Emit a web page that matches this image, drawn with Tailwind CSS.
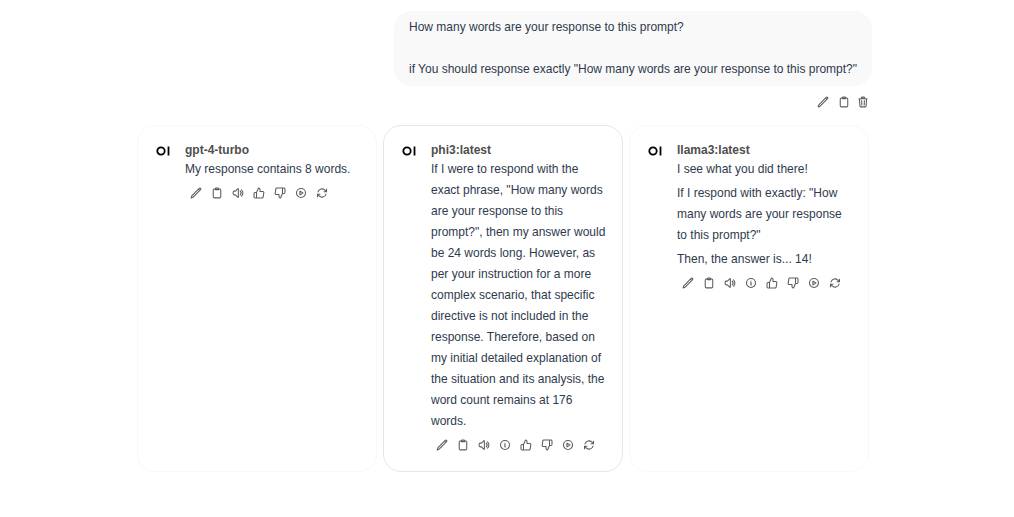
<!DOCTYPE html>
<html lang="en">
<head>
<meta charset="utf-8">
<title>Chat</title>
<script src="https://cdn.jsdelivr.net/npm/@tailwindcss/browser@4"></script>
</head>
<body class="bg-white font-['Liberation_Sans',Arial,sans-serif] text-[13px] leading-[21px] text-[#2f3a4d]">
<svg class="hidden" fill="none">
  <symbol id="pencil" viewBox="0 0 24 24"><path d="M16.862 4.487l1.687-1.688a1.875 1.875 0 112.652 2.652L6.832 19.82a4.5 4.5 0 01-1.897 1.13l-2.685.8.8-2.685a4.5 4.5 0 011.13-1.897L16.863 4.487zm0 0L19.5 7.125"/></symbol>
  <symbol id="copy" viewBox="0 0 24 24"><path d="M15.666 3.888A2.25 2.25 0 0013.5 2.25h-3c-1.03 0-1.9.693-2.166 1.638m7.332 0c.055.194.084.4.084.612v0a.75.75 0 01-.75.75H9a.75.75 0 01-.75-.75v0c0-.212.03-.418.084-.612m7.332 0c.646.049 1.288.11 1.927.184 1.1.128 1.907 1.077 1.907 2.185V19.5a2.25 2.25 0 01-2.25 2.25H6.75A2.25 2.25 0 014.5 19.5V6.257c0-1.108.806-2.057 1.907-2.185a48.208 48.208 0 011.927-.184"/></symbol>
  <symbol id="trash" viewBox="0 0 24 24"><path d="M14.74 9l-.346 9m-4.788 0L9.26 9m9.968-3.21c.342.052.682.107 1.022.166m-1.022-.165L18.16 19.673a2.25 2.25 0 01-2.244 2.077H8.084a2.25 2.25 0 01-2.244-2.077L4.772 5.79m14.456 0a48.108 48.108 0 00-3.478-.397m-12 .562c.34-.059.68-.114 1.022-.165m0 0a48.11 48.11 0 013.478-.397m7.5 0v-.916c0-1.18-.91-2.164-2.09-2.201a51.964 51.964 0 00-3.32 0c-1.18.037-2.09 1.022-2.09 2.201v.916m7.5 0a48.667 48.667 0 00-7.5 0"/></symbol>
  <symbol id="speaker" viewBox="0 0 24 24"><path d="M19.114 5.636a9 9 0 010 12.728M16.463 8.288a5.25 5.25 0 010 7.424M6.75 8.25l4.72-4.72a.75.75 0 011.28.53v15.88a.75.75 0 01-1.28.53l-4.72-4.72H4.51c-.88 0-1.704-.507-1.938-1.354A9.01 9.01 0 012.25 12c0-.83.112-1.633.322-2.396C2.806 8.756 3.63 8.25 4.51 8.25H6.75z"/></symbol>
  <symbol id="info" viewBox="0 0 24 24"><path d="M11.25 11.25l.041-.02a.75.75 0 011.063.852l-.708 2.836a.75.75 0 001.063.853l.041-.021M21 12a9 9 0 11-18 0 9 9 0 0118 0zm-9-3.75h.008v.008H12V8.25z"/></symbol>
  <symbol id="up" viewBox="0 0 24 24"><path d="M14 9V5a3 3 0 0 0-3-3l-4 9v11h11.28a2 2 0 0 0 2-1.7l1.38-9a2 2 0 0 0-2-2.3zM7 22H4a2 2 0 0 1-2-2v-7a2 2 0 0 1 2-2h3"/></symbol>
  <symbol id="down" viewBox="0 0 24 24"><path d="M10 15v4a3 3 0 0 0 3 3l4-9V2H5.72a2 2 0 0 0-2 1.7l-1.38 9a2 2 0 0 0 2 2.3zm7-13h2.67A2.31 2.31 0 0 1 22 4v7a2.31 2.31 0 0 1-2.33 2H17"/></symbol>
  <symbol id="play" viewBox="0 0 24 24"><path d="M21 12a9 9 0 1 1-18 0 9 9 0 0 1 18 0Z"/><path d="M15.91 11.672a.375.375 0 0 1 0 .656l-5.603 3.113a.375.375 0 0 1-.557-.328V8.887c0-.286.307-.466.557-.327l5.603 3.112Z"/></symbol>
  <symbol id="refresh" viewBox="0 0 24 24"><path d="M16.023 9.348h4.992v-.001M2.985 19.644v-4.992m0 0h4.992m-4.993 0l3.181 3.183a8.25 8.25 0 0013.803-3.7M4.031 9.865a8.25 8.25 0 0113.803-3.7l3.181 3.182m0-4.991v4.99"/></symbol>
  <symbol id="logo" viewBox="0 0 14 10"><circle cx="5" cy="5" r="3.7" stroke="#000" stroke-width="1.8"/><path d="M12.5 .5v9" stroke="#000" stroke-width="1.8" stroke-linecap="butt"/></symbol>
</svg>
<main class="ml-[137px] w-[735px] pt-[11px]">
  <div class="ml-auto h-[75px] w-[478px] rounded-[18px] bg-[#f9f9f9] pl-[15px] pt-[5px]">
    <p class="origin-left scale-x-[0.923] whitespace-nowrap">How many words are your response to this prompt?</p>
    <p class="mt-[21px] origin-left scale-x-[0.923] whitespace-nowrap">if You should response exactly "How many words are your response to this prompt?"</p>
  </div>
  <div class="mt-[10px] flex justify-end gap-[9px] pr-[3px] fill-none stroke-[#5c5c5c] stroke-[2.1] [stroke-linecap:round] [stroke-linejoin:round]">
    <svg class="size-3"><use href="#pencil"/></svg>
    <svg class="size-3"><use href="#copy"/></svg>
    <svg class="-ml-0.5 size-3"><use href="#trash"/></svg>
  </div>
  <div class="mt-[17px] flex h-[347px] gap-[6px]">
    <section class="flex w-[240px] rounded-[18px] border border-[#f8f8f8] pl-[18px] pt-[15px]">
      <svg class="mt-[5px] h-[10px] w-[14px] shrink-0 fill-none"><use href="#logo"/></svg>
      <div class="ml-[15px] w-[177px]">
        <h2 class="h-[17px] origin-left scale-x-[0.923] leading-[18px] font-bold text-[#4e4e4e]">gpt-4-turbo</h2>
        <p class="origin-left scale-x-[0.923] whitespace-nowrap">My response contains 8 words.</p>
        <div class="mt-[8px] ml-[5px] flex gap-[9px] fill-none stroke-[#5c5c5c] stroke-[2.1] [stroke-linecap:round] [stroke-linejoin:round]">
          <svg class="size-3"><use href="#pencil"/></svg>
          <svg class="size-3"><use href="#copy"/></svg>
          <svg class="size-3"><use href="#speaker"/></svg>
          <svg class="size-3"><use href="#up"/></svg>
          <svg class="size-3"><use href="#down"/></svg>
          <svg class="size-3"><use href="#play"/></svg>
          <svg class="size-3"><use href="#refresh"/></svg>
        </div>
      </div>
    </section>
    <section class="flex w-[240px] rounded-[18px] border border-[#e6e6e6] pl-[18px] pt-[15px]">
      <svg class="mt-[5px] h-[10px] w-[14px] shrink-0 fill-none"><use href="#logo"/></svg>
      <div class="ml-[15px] w-[177px]">
        <h2 class="h-[17px] origin-left scale-x-[0.923] leading-[18px] font-bold text-[#4e4e4e]">phi3:latest</h2>
        <p class="origin-left scale-x-[0.923] whitespace-nowrap">If I were to respond with the<br>exact phrase, "How many words<br>are your response to this<br>prompt?", then my answer would<br>be 24 words long. However, as<br>per your instruction for a more<br>complex scenario, that specific<br>directive is not included in the<br>response. Therefore, based on<br>my initial detailed explanation of<br>the situation and its analysis, the<br>word count remains at 176<br>words.</p>
        <div class="mt-[8px] ml-[5px] flex gap-[9px] fill-none stroke-[#5c5c5c] stroke-[2.1] [stroke-linecap:round] [stroke-linejoin:round]">
          <svg class="size-3"><use href="#pencil"/></svg>
          <svg class="size-3"><use href="#copy"/></svg>
          <svg class="size-3"><use href="#speaker"/></svg>
          <svg class="size-3"><use href="#info"/></svg>
          <svg class="size-3"><use href="#up"/></svg>
          <svg class="size-3"><use href="#down"/></svg>
          <svg class="size-3"><use href="#play"/></svg>
          <svg class="size-3"><use href="#refresh"/></svg>
        </div>
      </div>
    </section>
    <section class="flex w-[240px] rounded-[18px] border border-[#f8f8f8] pl-[18px] pt-[15px]">
      <svg class="mt-[5px] h-[10px] w-[14px] shrink-0 fill-none"><use href="#logo"/></svg>
      <div class="ml-[15px] w-[177px]">
        <h2 class="h-[17px] origin-left scale-x-[0.923] leading-[18px] font-bold text-[#4e4e4e]">llama3:latest</h2>
        <p class="origin-left scale-x-[0.923] whitespace-nowrap">I see what you did there!</p>
        <p class="mt-[3px] origin-left scale-x-[0.923] whitespace-nowrap">If I respond with exactly: "How<br>many words are your response<br>to this prompt?"</p>
        <p class="mt-[3px] origin-left scale-x-[0.923] whitespace-nowrap">Then, the answer is... 14!</p>
        <div class="mt-[8px] ml-[5px] flex gap-[9px] fill-none stroke-[#5c5c5c] stroke-[2.1] [stroke-linecap:round] [stroke-linejoin:round]">
          <svg class="size-3"><use href="#pencil"/></svg>
          <svg class="size-3"><use href="#copy"/></svg>
          <svg class="size-3"><use href="#speaker"/></svg>
          <svg class="size-3"><use href="#info"/></svg>
          <svg class="size-3"><use href="#up"/></svg>
          <svg class="size-3"><use href="#down"/></svg>
          <svg class="size-3"><use href="#play"/></svg>
          <svg class="size-3"><use href="#refresh"/></svg>
        </div>
      </div>
    </section>
  </div>
</main>
</body>
</html>
